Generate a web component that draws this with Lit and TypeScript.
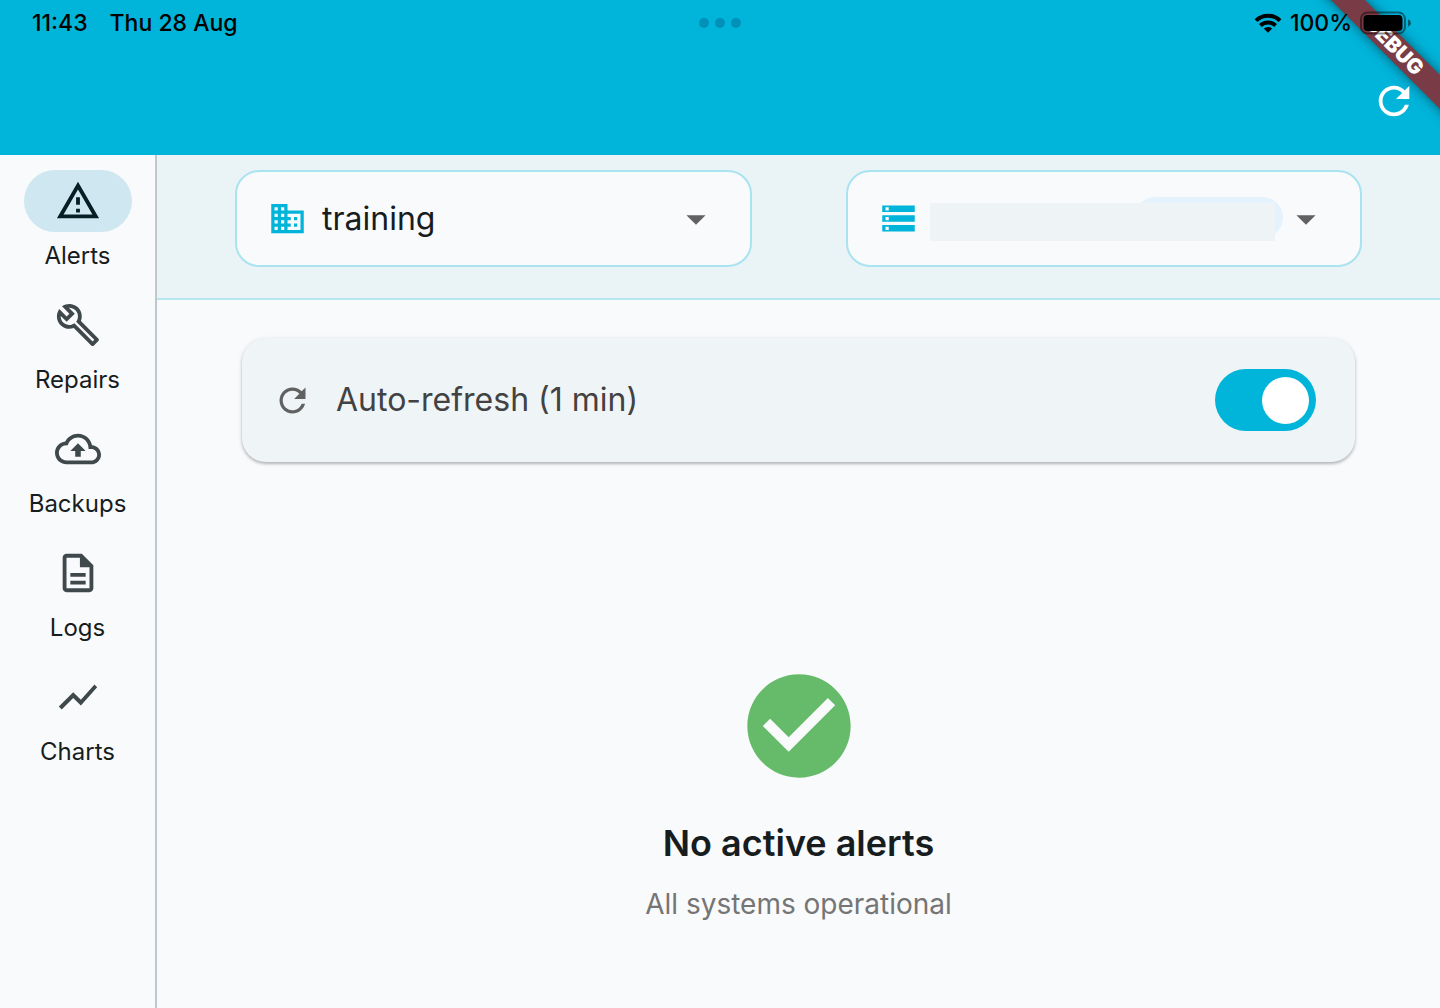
import { LitElement, html, css, svg } from "lit";
import { customElement, property, state } from "lit/decorators.js";
import { classMap } from "lit/directives/class-map.js";

const ICONS: Record<string, string> = {
  alerts: "M12 5.99L19.53 19H4.47L12 5.99M12 2L1 21h22L12 2zm1 14h-2v2h2v-2zm0-6h-2v4h2v-4z",
  repairs:
    "M22.61 18.99l-9.08-9.08c.93-2.34.45-5.1-1.44-7C9.79.61 6.21.4 3.66 2.26L7.5 6.11 6.08 7.52 2.25 3.69C.39 6.23.6 9.82 2.9 12.11c1.86 1.86 4.57 2.35 6.89 1.48l9.11 9.11c.39.39 1.02.39 1.41 0l2.3-2.3c.4-.38.4-1.01 0-1.41zm-3 1.6l-9.46-9.46c-.61.45-1.29.72-2 .82-1.36.2-2.79-.21-3.83-1.25C3.37 9.76 2.93 8.5 3 7.26l3.09 3.09 4.24-4.24-3.09-3.09c1.24-.07 2.49.37 3.44 1.31 1.08 1.08 1.49 2.57 1.24 3.96-.12.71-.42 1.37-.88 1.96l9.45 9.45-.88.89z",
  backups:
    "M19.35 10.04C18.67 6.59 15.64 4 12 4 9.11 4 6.6 5.64 5.35 8.04 2.34 8.36 0 10.91 0 14c0 3.31 2.69 6 6 6h13c2.76 0 5-2.24 5-5 0-2.64-2.05-4.78-4.65-4.96zM19 18H6c-2.21 0-4-1.79-4-4s1.79-4 4-4h.71C7.37 7.69 9.48 6 12 6c3.04 0 5.5 2.46 5.5 5.5v.5H19c1.66 0 3 1.34 3 3s-1.34 3-3 3zM8 13h2.55v3h2.9v-3H16l-4-4z",
  logs: "M8 16h8v2H8zm0-4h8v2H8zm6-10H6c-1.1 0-2 .9-2 2v16c0 1.1.89 2 1.99 2H18c1.1 0 2-.9 2-2V8l-6-6zm4 18H6V4h7v5h5v11z",
  charts: "M3.5 18.49l6-6.01 4 4L22 6.92l-1.41-1.41-7.09 7.97-4-4L2 16.99z",
  business:
    "M12 7V3H2v18h20V7H12zM6 19H4v-2h2v2zm0-4H4v-2h2v2zm0-4H4V9h2v2zm0-4H4V5h2v2zm4 12H8v-2h2v2zm0-4H8v-2h2v2zm0-4H8V9h2v2zm0-4H8V5h2v2zm10 12h-8v-2h2v-2h-2v-2h2v-2h-2V9h8v10zm-2-8h-2v2h2v-2zm0 4h-2v2h2v-2z",
  storage: "M2 20h20v-4H2v4zm2-3h2v2H4v-2zM2 4v4h20V4H2zm4 3H4V5h2v2zm-4 7h20v-4H2v4zm2-3h2v2H4v-2z",
  arrow: "M7 10l5 5 5-5z",
  refresh:
    "M17.65 6.35C16.2 4.9 14.21 4 12 4c-4.42 0-7.99 3.58-7.99 8s3.57 8 7.99 8c3.73 0 6.84-2.55 7.73-6h-2.08c-.82 2.33-3.04 4-5.65 4-3.31 0-6-2.69-6-6s2.69-6 6-6c1.66 0 3.14.69 4.22 1.78L13 11h7V4l-2.35 2.35z",
  check:
    "M12 2C6.48 2 2 6.48 2 12s4.48 10 10 10 10-4.48 10-10S17.52 2 12 2zm-2 15l-5-5 1.41-1.41L10 14.17l7.59-7.59L19 8l-9 9z",
};

@customElement("app-icon")
export class AppIcon extends LitElement {
  @property() name = "";

  static styles = css`
    :host {
      display: block;
      flex: none;
      width: 46px;
      height: 46px;
    }
    .glyph {
      display: block;
      width: 100%;
      height: 100%;
      fill: currentColor;
    }
  `;

  render() {
    return html`<svg class="glyph" viewBox="0 0 24 24" aria-hidden="true">
      ${svg`<path d=${ICONS[this.name] ?? ""}></path>`}
    </svg>`;
  }
}

@customElement("status-bar")
export class StatusBar extends LitElement {
  static styles = css`
    :host {
      display: grid;
      grid-template-columns: 1fr auto 1fr;
      align-items: center;
      height: 46px;
      padding: 0 28px;
      font-size: 23px;
      line-height: 28px;
      font-weight: 500;
      color: #000;
    }
    .left {
      display: flex;
      gap: 22px;
      padding-left: 4px;
    }
    .dots {
      display: flex;
      gap: 6px;
    }
    .dot {
      width: 10px;
      height: 10px;
      border-radius: 50%;
      background: #0090b8;
    }
    .right {
      display: flex;
      align-items: center;
      justify-content: flex-end;
      gap: 8px;
    }
    .wifi {
      width: 28px;
      height: 20px;
    }
    .battery {
      width: 52px;
      height: 24px;
    }
  `;

  render() {
    return html`
      <div class="left"><span>11:43</span><span>Thu 28 Aug</span></div>
      <div class="dots"><span class="dot"></span><span class="dot"></span><span class="dot"></span></div>
      <div class="right">
        <svg class="wifi" viewBox="0 0 28 20" aria-hidden="true">
          <g fill="none" stroke="#000" stroke-width="4">
            <path d="M2 7.6a17 17 0 0 1 24 0"></path>
            <path d="M6.4 12.5a11 11 0 0 1 15.2 0"></path>
          </g>
          <path d="M14 19.8l-4.2-4.2a6.2 6.2 0 0 1 8.4 0z"></path>
        </svg>
        <span>100%</span>
        <svg class="battery" viewBox="0 0 52 24" aria-hidden="true">
          <rect x="1" y="1.5" width="44" height="21" rx="6.5" fill="none" stroke="#000" stroke-opacity=".45" stroke-width="2"></rect>
          <rect x="3.5" y="4" width="39" height="16" rx="4"></rect>
          <path d="M48 8.2q3 1.2 3 3.8t-3 3.8z" fill-opacity=".5"></path>
        </svg>
      </div>
    `;
  }
}

interface NavItem {
  id: string;
  label: string;
}

const NAV: NavItem[] = [
  { id: "alerts", label: "Alerts" },
  { id: "repairs", label: "Repairs" },
  { id: "backups", label: "Backups" },
  { id: "logs", label: "Logs" },
  { id: "charts", label: "Charts" },
];

@customElement("app-root")
export class AppRoot extends LitElement {
  @state() private section = "alerts";
  @state() private autoRefresh = true;

  static styles = css`
    :host {
      display: flex;
      flex-direction: column;
      position: relative;
      overflow: hidden;
      min-height: 100vh;
      background: #f9fafc;
      color: #171d1e;
      font-family: Inter, "Liberation Sans", sans-serif;
    }
    *,
    *::before {
      box-sizing: border-box;
    }
    button,
    select {
      font: inherit;
      color: inherit;
      border: 0;
      padding: 0;
      margin: 0;
      background: none;
      cursor: pointer;
    }
    .header {
      background: #00b4da;
    }
    .status {
      position: relative;
      z-index: 2;
    }
    .toolbar {
      display: flex;
      justify-content: flex-end;
      align-items: center;
      height: 109px;
      padding: 0 23px;
      color: #fff;
    }
    .action {
      display: block;
    }
    .banner {
      position: absolute;
      z-index: 1;
      top: 34px;
      right: -74px;
      width: 240px;
      height: 24px;
      transform: rotate(45deg);
      background: #793b45;
      box-shadow: 0 0 12px rgba(0, 0, 0, 0.5);
      color: #fff;
      font-size: 21px;
      line-height: 24px;
      font-weight: 900;
      text-align: center;
    }
    .body {
      flex: 1;
      display: flex;
    }
    .rail {
      display: flex;
      flex-direction: column;
      align-items: center;
      gap: 23px;
      flex: none;
      width: 157px;
      padding-top: 15px;
      border-right: 2px solid #bfc8cc;
    }
    .dest {
      display: flex;
      flex-direction: column;
      align-items: center;
      gap: 8px;
      font-size: 24px;
      line-height: 31px;
    }
    .pill {
      display: grid;
      place-items: center;
      width: 108px;
      height: 62px;
      border-radius: 31px;
      color: #3f484b;
    }
    .pill.on {
      background: #cee7f0;
      color: #071e25;
    }
    .main {
      flex: 1;
      min-width: 0;
      display: flex;
      flex-direction: column;
    }
    .filters {
      display: flex;
      gap: 94px;
      padding: 15px 78px 31px;
      background: #eaf4f7;
      border-bottom: 2px solid #b5e6f2;
    }
    .field {
      position: relative;
      flex: 1;
      min-width: 0;
      display: flex;
      align-items: center;
      height: 97px;
      padding: 0 31px;
      border: 2px solid #a9e3f0;
      border-radius: 24px;
      background: #f9fafc;
    }
    .lead {
      width: 39px;
      height: 39px;
      color: #00b4da;
    }
    .drop {
      color: #616161;
      pointer-events: none;
    }
    .select {
      flex: 1;
      min-width: 0;
      height: 60px;
      margin-left: 15px;
      appearance: none;
      outline: none;
      font-size: 32px;
    }
    .value {
      flex: 1;
      display: grid;
      margin-left: 12px;
    }
    .tag,
    .mask {
      grid-area: 1 / 1;
    }
    .tag {
      justify-self: end;
      width: 148px;
      height: 41px;
      border-radius: 23px;
      background: #e3f2fd;
    }
    .mask {
      margin: 6px 8px 0 0;
      height: 38px;
      background: #eef4f6;
    }
    .cover {
      position: absolute;
      inset: 0;
      width: 100%;
      appearance: none;
      outline: none;
    }
    .card {
      display: flex;
      align-items: center;
      gap: 24px;
      margin: 38px 85px 0;
      padding: 31px 39px 31px 31px;
      border-radius: 24px;
      background: #eff4f6;
      box-shadow: 0 2px 3px rgba(0, 0, 0, 0.22), 0 1px 5px rgba(0, 0, 0, 0.1);
    }
    .spin {
      width: 39px;
      height: 39px;
      color: #616161;
    }
    .caption {
      flex: 1;
      font-size: 32px;
      line-height: 40px;
      color: #424242;
    }
    .switch {
      appearance: none;
      flex: none;
      width: 101px;
      height: 62px;
      margin: 0;
      padding: 0 7px;
      border-radius: 31px;
      background: #bdbdbd;
      display: flex;
      align-items: center;
      cursor: pointer;
    }
    .switch::before {
      content: "";
      width: 47px;
      height: 47px;
      border-radius: 50%;
      background: #fff;
    }
    .switch:checked {
      background: #00b4da;
      justify-content: flex-end;
    }
    .empty {
      display: flex;
      flex-direction: column;
      align-items: center;
      padding-top: 202px;
    }
    .ok {
      width: 124px;
      height: 124px;
      color: #66bb6a;
    }
    .title {
      margin: 31px 0 17px;
      font-size: 36px;
      line-height: 48px;
      font-weight: 600;
    }
    .sub {
      margin: 0;
      font-size: 28px;
      line-height: 40px;
      color: #757575;
    }
  `;

  private toggle(e: Event) {
    this.autoRefresh = (e.target as HTMLInputElement).checked;
  }

  render() {
    return html`
      <header class="header">
        <status-bar class="status"></status-bar>
        <div class="toolbar">
          <button class="action" aria-label="Refresh"><app-icon name="refresh"></app-icon></button>
        </div>
      </header>
      <div class="banner">DEBUG</div>
      <div class="body">
        <nav class="rail">
          ${NAV.map(
            (n) => html`<button class="dest" @click=${() => (this.section = n.id)}>
              <span class=${classMap({ pill: true, on: n.id === this.section })}>
                <app-icon name=${n.id}></app-icon>
              </span>
              <span>${n.label}</span>
            </button>`
          )}
        </nav>
        <main class="main">
          <div class="filters">
            <div class="field">
              <app-icon class="lead" name="business"></app-icon>
              <select class="select" aria-label="Organisation">
                <option>training</option>
              </select>
              <app-icon class="drop" name="arrow"></app-icon>
            </div>
            <div class="field">
              <app-icon class="lead" name="storage"></app-icon>
              <div class="value"><span class="tag"></span><span class="mask"></span></div>
              <app-icon class="drop" name="arrow"></app-icon>
              <select class="cover" aria-label="Server">
                <option></option>
              </select>
            </div>
          </div>
          <section class="card">
            <app-icon class="spin" name="refresh"></app-icon>
            <label class="caption" for="auto">Auto-refresh (1 min)</label>
            <input class="switch" id="auto" type="checkbox" role="switch" .checked=${this.autoRefresh} @change=${this.toggle} />
          </section>
          <section class="empty">
            <app-icon class="ok" name="check"></app-icon>
            <h1 class="title">No active alerts</h1>
            <p class="sub">All systems operational</p>
          </section>
        </main>
      </div>
    `;
  }
}
